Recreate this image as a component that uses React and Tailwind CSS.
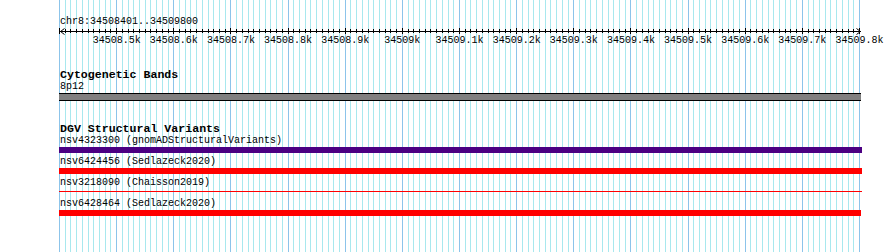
import React from "react";

const PX = 800 / 1400; // px per bp
const MINOR = 10 * PX;
const mono = { fontFamily: '"Liberation Mono", "DejaVu Sans Mono", monospace' };

function Grid() {
  const lines = [];
  for (let j = 0; j <= 140; j++) {
    const x = Math.round(59 + j * MINOR);
    const major = j % 10 === 0;
    lines.push(
      <rect key={j} x={x} y={0} width={1} height={252} fill={major ? "#8cc4ea" : "#a8e8ee"} />
    );
  }
  return (
    <svg className="absolute inset-0" width="890" height="252" shapeRendering="crispEdges">
      {lines}
    </svg>
  );
}

function Ruler() {
  const ticks = [];
  for (let j = 0; j <= 140; j++) {
    const x = Math.round(59 + j * MINOR) - 59;
    const major = j % 10 === 0;
    ticks.push(
      <rect key={j} x={x} y={major ? 0 : 1} width={1} height={major ? 6 : 4} fill="#000" />
    );
  }
  const labels = [];
  for (let i = 1; i <= 14; i++) {
    const kb = 34508.4 + i * 0.1;
    const txt = (Math.round(kb * 10) / 10).toString() + "k";
    labels.push(
      <span
        key={i}
        className="absolute top-0 -translate-x-1/2 whitespace-pre"
        style={{ left: -0.5 + i * 100 * PX }}
      >
        {txt}
      </span>
    );
  }
  return (
    <div>
      <svg className="-ml-px block" width="803" height="7" shapeRendering="crispEdges">
        <rect x={1} y={3} width={801} height={1} fill="#000" />
        {ticks}
        <path d="M1.5 3.5 L5.5 0.5 M1.5 3.5 L5.5 6.5" stroke="#000" strokeWidth="1" fill="none" shapeRendering="auto" />
        <path d="M801.5 3.5 L797.5 0.5 M801.5 3.5 L797.5 6.5" stroke="#000" strokeWidth="1" fill="none" shapeRendering="auto" />
      </svg>
      <div className="relative h-[12px] text-[10px] leading-[12px]">{labels}</div>
    </div>
  );
}

function Feature({ label, color, thin, first, width = 803 }) {
  return (
    <div className={first ? "-mt-px" : "mt-[3px]"}>
      <div className="text-[10px] leading-[12px] whitespace-pre text-black">{label}</div>
      {thin ? (
        <div className="-ml-px h-[6px] pt-[2px]" style={{ width }}>
          <div className="h-px" style={{ background: color }} />
        </div>
      ) : (
        <div className="-ml-px h-[6px]" style={{ width, background: color }} />
      )}
    </div>
  );
}

export default function App() {
  return (
    <div className="relative h-[252px] w-[890px] overflow-hidden bg-white text-black" style={mono}>
      <Grid />
      <div className="relative pl-[60px] pt-[16px]">
        <div className="text-[10px] leading-[12px] whitespace-pre">chr8:34508401..34509800</div>
        <Ruler />

        <div className="mt-[21px] text-[11.6px] font-bold leading-[14px] whitespace-pre">Cytogenetic Bands</div>
        <div className="-mt-px text-[10px] leading-[12px]">8p12</div>
        <div className="-ml-px h-[8px] w-[802px] border-y border-black bg-[#808080]" />

        <div className="mt-[21px] text-[11.6px] font-bold leading-[14px] whitespace-pre">DGV Structural Variants</div>
        <Feature first label="nsv4323300 (gnomADStructuralVariants)" color="#4b0082" />
        <Feature label="nsv6424456 (Sedlazeck2020)" color="#ff0000" />
        <Feature label="nsv3218090 (Chaisson2019)" color="#ff0000" thin />
        <Feature label="nsv6428464 (Sedlazeck2020)" color="#ff0000" width={802} />
      </div>
    </div>
  );
}
